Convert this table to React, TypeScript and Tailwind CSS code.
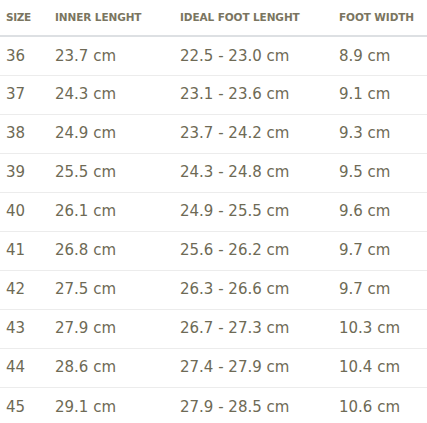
import React from "react";

const rows = [
  ["36", "23.7 cm", "22.5 - 23.0 cm", "8.9 cm"],
  ["37", "24.3 cm", "23.1 - 23.6 cm", "9.1 cm"],
  ["38", "24.9 cm", "23.7 - 24.2 cm", "9.3 cm"],
  ["39", "25.5 cm", "24.3 - 24.8 cm", "9.5 cm"],
  ["40", "26.1 cm", "24.9 - 25.5 cm", "9.6 cm"],
  ["41", "26.8 cm", "25.6 - 26.2 cm", "9.7 cm"],
  ["42", "27.5 cm", "26.3 - 26.6 cm", "9.7 cm"],
  ["43", "27.9 cm", "26.7 - 27.3 cm", "10.3 cm"],
  ["44", "28.6 cm", "27.4 - 27.9 cm", "10.4 cm"],
  ["45", "29.1 cm", "27.9 - 28.5 cm", "10.6 cm"],
];

export default function App() {
  return (
    <div className="w-[427px] bg-white" style={{ fontFamily: '"DejaVu Sans", sans-serif' }}>
      <table className="w-full border-collapse text-left">
        <colgroup>
          <col className="w-[55px]" />
          <col className="w-[125px]" />
          <col className="w-[159px]" />
          <col />
        </colgroup>
        <thead>
          <tr className="h-[36px] border-b-2 border-[#dde0e3]">
            <th className="pl-[6px] text-[10.5px] font-bold text-[#7a7560] tracking-[-0.4px]">SIZE</th>
            <th className="text-[10.5px] font-bold text-[#7a7560] tracking-[-0.1px]">INNER LENGHT</th>
            <th className="text-[10.5px] font-bold text-[#7a7560] tracking-[-0.1px]">IDEAL FOOT LENGHT</th>
            <th className="text-[10.5px] font-bold text-[#7a7560] tracking-[-0.1px]">FOOT WIDTH</th>
          </tr>
        </thead>
        <tbody>
          {rows.map((r, i) => (
            <tr key={r[0]} className={`h-[39px] ${i < rows.length - 1 ? "border-b border-[#ececec]" : ""}`}>
              <td className="pl-[6px] text-[15px] text-[#6e6a55]">{r[0]}</td>
              <td className="text-[15px] text-[#6e6a55]">{r[1]}</td>
              <td className="text-[15px] text-[#6e6a55]">{r[2]}</td>
              <td className="text-[15px] text-[#6e6a55]">{r[3]}</td>
            </tr>
          ))}
        </tbody>
      </table>
    </div>
  );
}
